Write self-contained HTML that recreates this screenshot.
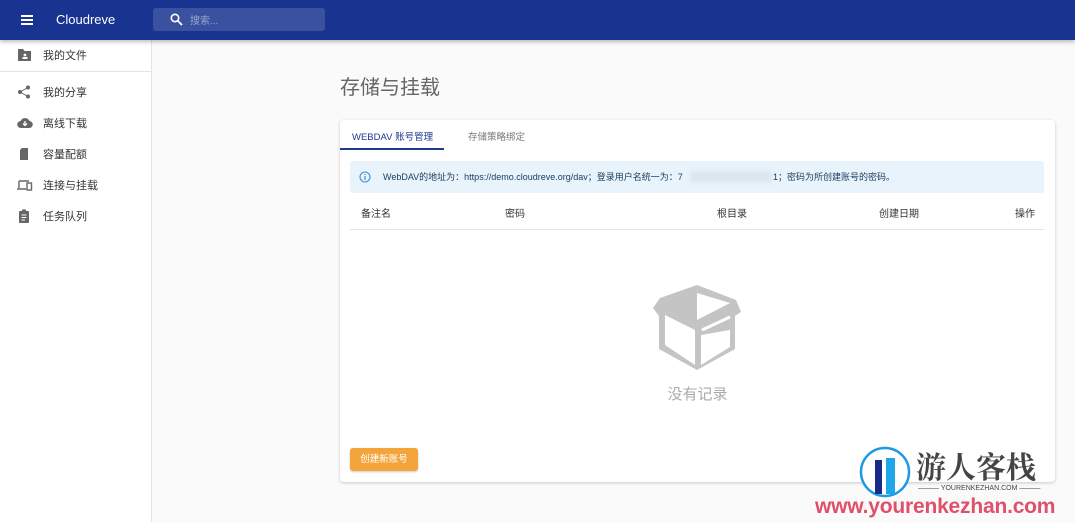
<!DOCTYPE html>
<html><head><meta charset="utf-8"><style>
*{margin:0;padding:0;box-sizing:border-box}
body{width:1075px;height:522px;overflow:hidden;background:#fafafa;font-family:"Liberation Sans","Noto Sans CJK SC",sans-serif;position:relative}
.hdr{position:absolute;left:0;top:0;width:1075px;height:40px;background:#183390;box-shadow:0 2px 4px rgba(0,0,0,.25);z-index:2}
.side{position:absolute;left:0;top:40px;width:152px;height:482px;background:#fff;border-right:1px solid #e4e4e4}
.it{position:absolute;left:0;width:151px;height:20px;font-size:11px;color:#333}
.it svg{position:absolute;left:17px;top:2px}
.it span{position:absolute;left:43px;top:1px}
.card{position:absolute;left:340px;top:120px;width:715px;height:362px;background:#fff;border-radius:4px;box-shadow:0 1px 3px rgba(0,0,0,.2)}
.th{position:absolute;top:205px;font-size:10px;color:#333}
</style></head><body>
<div class="hdr">
<div style="position:absolute;left:21px;top:15px;width:12px;height:2px;background:#fff;box-shadow:0 4px 0 #fff,0 8px 0 #fff"></div>
<div style="position:absolute;left:56px;top:12px;color:#fff;font-size:13px">Cloudreve</div>
<div style="position:absolute;left:153px;top:8px;width:172px;height:23px;background:#3a51a0;border-radius:3px">
<svg style="position:absolute;left:17px;top:5px" width="13" height="13" viewBox="0 0 13 13"><circle cx="5" cy="5" r="3.7" fill="none" stroke="#fff" stroke-width="1.6"/><path d="M8 8l4 4" stroke="#fff" stroke-width="1.8"/></svg>
<span style="position:absolute;left:37px;top:4px;color:#9aa5cf;font-size:10px">搜索...</span></div>
</div>
<div class="side">
<div style="position:absolute;left:0;top:31px;width:151px;height:1px;background:#e4e4e4"></div>
<div class="it" style="top:6px"><svg width="15" height="14" viewBox="0 0 15 14"><path d="M1 1h5l1.5 2H14v10H1z" fill="#666"/><circle cx="8" cy="7" r="1.4" fill="#fff"/><rect x="5.5" y="9" width="5" height="2" fill="#fff"/></svg><span>我的文件</span></div>
<div class="it" style="top:43px"><svg width="14" height="14" viewBox="0 0 14 14"><circle cx="11" cy="2.5" r="2" fill="#666"/><circle cx="3" cy="7" r="2" fill="#666"/><circle cx="11" cy="11.5" r="2" fill="#666"/><path d="M11 2.5L3 7l8 4.5" stroke="#666" fill="none"/></svg><span>我的分享</span></div>
<div class="it" style="top:74px"><svg width="16" height="14" viewBox="0 0 16 14"><path d="M4 12a3.5 3.5 0 0 1-.5-7A5 5 0 0 1 12.5 5 3.5 3.5 0 0 1 12 12z" fill="#666"/><path d="M8 5v4M6 7.5l2 2 2-2" stroke="#fff" stroke-width="1.3" fill="none"/></svg><span>离线下载</span></div>
<div class="it" style="top:105px"><svg width="14" height="14" viewBox="0 0 14 14"><path d="M5 1h6v12H3V3z" fill="#666"/></svg><span>容量配额</span></div>
<div class="it" style="top:136px"><svg width="16" height="14" viewBox="0 0 16 14"><path d="M2 3h10M2 3v7M0 11h9" stroke="#666" stroke-width="1.4" fill="none"/><rect x="10" y="5" width="4.5" height="7" fill="none" stroke="#666" stroke-width="1.4"/></svg><span>连接与挂载</span></div>
<div class="it" style="top:167px"><svg width="14" height="14" viewBox="0 0 14 14"><rect x="2" y="2" width="10" height="12" rx="1" fill="#666"/><rect x="5" y="0.5" width="4" height="3" fill="#666"/><path d="M4.5 6h5M4.5 8.5h5M4.5 11h3.5" stroke="#fff"/></svg><span>任务队列</span></div>
</div>
<div style="position:absolute;left:340px;top:71px;font-size:20px;color:#666">存储与挂载</div>
<div class="card">
<div style="position:absolute;left:12px;top:9px;font-size:9.5px;color:#1e3a8a">WEBDAV 账号管理</div>
<div style="position:absolute;left:0;top:28px;width:104px;height:2px;background:#1e3a8a"></div>
<div style="position:absolute;left:128px;top:9px;font-size:9.5px;color:#777">存储策略绑定</div>
<div style="position:absolute;left:10px;top:41px;width:694px;height:32px;background:#e8f3fc;border-radius:3px">
<svg style="position:absolute;left:9px;top:10px" width="12" height="12" viewBox="0 0 12 12"><circle cx="6" cy="6" r="5" fill="none" stroke="#3f8fdc" stroke-width="1.1"/><path d="M6 5v4M6 3v1" stroke="#3f8fdc" stroke-width="1.2"/></svg>
<span style="position:absolute;left:33px;top:9px;font-size:9px;color:#1d3f60">WebDAV的地址为：https://demo.cloudreve.org/dav；登录用户名统一为：7</span>
<div style="position:absolute;left:340px;top:10px;width:82px;height:12px;background:#dde6ee;filter:blur(2px)"></div>
<span style="position:absolute;left:423px;top:9px;font-size:9px;color:#1d3f60">1；密码为所创建账号的密码。</span>
</div>
<div style="position:absolute;left:10px;top:109px;width:694px;height:1px;background:#e4e4e4"></div>
<svg style="position:absolute;left:312px;top:164px" width="92" height="88" viewBox="0 0 92 88"><path d="M45 1L84 16 89 28 83 32V65L45 86 7 65V32L1 24 8 14z" fill="#c4c4c4"/><path d="M13 31l30 15v35L13 61z" fill="#fff"/><path d="M49 51l29-5v17L49 81z" fill="#fff"/><path d="M45 9v27l33-17z" fill="#fff"/><path d="M50 46l28-13" stroke="#fff" stroke-width="3"/></svg>
<div style="position:absolute;left:0;width:715px;top:263px;text-align:center;font-size:15px;color:#aaa">没有记录</div>
<div style="position:absolute;left:10px;top:328px;width:68px;height:23px;background:#f3a53c;border-radius:3px;color:#fff;font-size:9.5px;text-align:center;line-height:23px;box-shadow:0 1px 2px rgba(0,0,0,.2)">创建新账号</div>
</div>
<div class="th" style="left:361px">备注名</div>
<div class="th" style="left:505px">密码</div>
<div class="th" style="left:717px">根目录</div>
<div class="th" style="left:879px">创建日期</div>
<div class="th" style="left:1015px">操作</div>
<svg style="position:absolute;left:859px;top:446px" width="52" height="52" viewBox="0 0 52 52"><circle cx="26" cy="26" r="24" fill="#fff" stroke="#1e9be0" stroke-width="2.5"/><path d="M16 14h7v34h-7z" fill="#1a2a8a"/><path d="M27 12h9v36h-9z" fill="#1ea6e8"/></svg>
<div style="position:absolute;left:916px;top:446px;font-size:30px;font-weight:bold;color:#444;font-family:'Noto Serif CJK SC',serif;line-height:38px">游人客栈</div>
<div style="position:absolute;left:918px;top:485px;font-size:7px;color:#444">——— YOURENKEZHAN.COM ———</div>
<div style="position:absolute;left:815px;top:495px;font-size:21px;font-weight:bold;color:#e0506a;letter-spacing:-0.2px">www.yourenkezhan.com</div>
</body></html>
